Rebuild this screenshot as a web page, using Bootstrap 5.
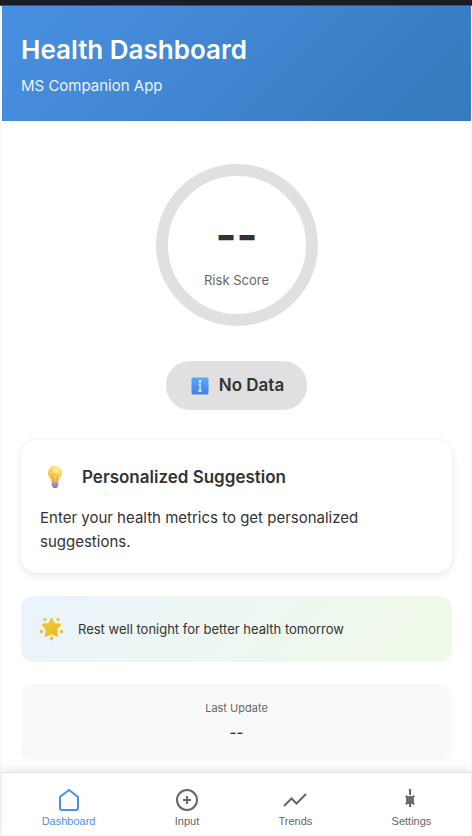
<!DOCTYPE html>
<html lang="en">
<head>
<meta charset="utf-8">
<meta name="viewport" content="width=device-width, initial-scale=1">
<title>Health Dashboard</title>
<link href="https://cdn.jsdelivr.net/npm/bootstrap@5.3.0/dist/css/bootstrap.min.css" rel="stylesheet">
<style>
body { font-family: Inter, "Open Sans", sans-serif; color: #333; background: #f8f9fa; }
.app-shell { margin: 0 1px 0 2px; background: #fff; }
.top-strip { height: 6px; background: #191c24; border-bottom: 1px solid #4b4e56; }
.app-header { padding: 28px 19px 23px; background: linear-gradient(135deg, #4a90e2, #357abd); }
.app-title { font-size: 26px; line-height: 32px; font-weight: 600; margin-bottom: 8px; }
.app-sub { font-size: 15px; line-height: 24px; opacity: .9; }
.app-main { padding: 43px 19px 12px; }
.score-ring { width: 162px; height: 162px; padding-top: 8px; border: 12px solid #e0e0e0; margin-bottom: 35px; }
.score-value { font-size: 45px; line-height: 54px; font-weight: 700; margin-bottom: 8px; }
.score-label { font-size: 13px; line-height: 20px; color: #666; }
.status-pill { background: #e0e0e0; border-radius: 24px; padding: 12px 23px 12px 25px; gap: 10px; font-size: 17px; line-height: 25px; font-weight: 600; margin-bottom: 30px; }
.tip-card { border-radius: 16px; padding: 22px 19px 19px; box-shadow: 0 2px 8px rgba(0,0,0,.1); margin-bottom: 23px; }
.tip-head { gap: 12px; margin-bottom: 14px; }
.tip-title { font-size: 17px; line-height: 30px; font-weight: 600; }
.tip-text { font-size: 15px; line-height: 24px; }
.note-card { min-height: 66px; border-radius: 12px; padding: 12px 18px 13px; gap: 14px; font-size: 13px; line-height: 20px; background: linear-gradient(135deg, #ebf3fc, #f0fae6); margin-bottom: 22px; }
.update-card { border-radius: 12px; padding: 15px 19px; background: #f8f9fb; }
.update-label { font-size: 11px; line-height: 18px; color: #666; margin-bottom: 3px; }
.update-value { font-size: 15px; line-height: 25px; font-weight: 500; }
.tab-bar { border-top: 1px solid #e0e0e0; background: #fff; padding: 15px 0 8px; box-shadow: 0 -2px 10px rgba(0,0,0,.1); }
.tab-item { font-family: "Liberation Sans", Arial, sans-serif; font-size: 11px; line-height: 13px; font-weight: 500; color: #666; gap: 3px; }
.tab-item.active { color: #4a90e2; }
.tab-item svg { fill: none; stroke: currentColor; stroke-width: 2; }
</style>
<script src="https://cdn.jsdelivr.net/npm/bootstrap@5.3.0/dist/js/bootstrap.bundle.min.js" defer></script>
</head>
<body class="min-vh-100 d-flex flex-column">
<div class="top-strip flex-shrink-0"></div>
<div class="app-shell flex-grow-1 d-flex flex-column">
  <header class="app-header text-white">
    <h1 class="app-title">Health Dashboard</h1>
    <p class="app-sub mb-0">MS Companion App</p>
  </header>
  <main class="app-main flex-grow-1 d-flex flex-column">
    <section class="score-ring rounded-circle align-self-center d-flex flex-column align-items-center justify-content-center">
      <div class="score-value">--</div>
      <div class="score-label">Risk Score</div>
    </section>
    <div class="status-pill align-self-center d-flex align-items-center">
      <svg width="18" height="18" viewBox="0 0 18 18" aria-hidden="true">
        <defs><linearGradient id="infoBlue" x2="0" y2="1"><stop stop-color="#5aa9ff"/><stop offset="1" stop-color="#447fe0"/></linearGradient></defs>
        <rect x=".5" y=".5" width="17" height="17" rx="1.5" fill="url(#infoBlue)"/>
        <circle cx="9" cy="4.3" r="1.2" fill="#fff"/>
        <path d="M7.500 7.200h1.600v6.600M7.200 14h3.600" stroke="#e4eeff" stroke-width="1.300" fill="none"/>
      </svg>
      <span>No Data</span>
    </div>
    <section class="tip-card">
      <div class="tip-head d-flex align-items-center">
        <svg width="30" height="24" viewBox="0 0 30 24" aria-hidden="true">
          <defs><radialGradient id="bulbGlow" cx=".6" cy=".25" r=".75"><stop stop-color="#fff3b0"/><stop offset=".45" stop-color="#ffd65c"/><stop offset="1" stop-color="#f5ae3c"/></radialGradient></defs>
          <path d="M15 1a7 7 0 0 0-7 7c0 4 3.500 5 3.800 9.500h6.400C18.500 13 22 12 22 8a7 7 0 0 0-7-7z" fill="url(#bulbGlow)"/>
          <path d="M13.500 17l-1-6c-1-2 1-3 2.500-1 1.500-2 3.500-1 2.500 1l-1 6" fill="none" stroke="#eda12f" stroke-width=".9"/>
          <path d="M11.800 17.500h6.400v3.500l-1.700 2h-3l-1.700-2z" fill="#8d75a8"/>
          <path d="M11.800 19l6.400-.5M12 21l6-.5" stroke="#c4b2d3" stroke-width=".8"/>
        </svg>
        <h2 class="tip-title mb-0">Personalized Suggestion</h2>
      </div>
      <p class="tip-text mb-0">Enter your health metrics to get personalized suggestions.</p>
    </section>
    <section class="note-card d-flex align-items-center">
      <svg width="25" height="24" viewBox="0 0 25 24" aria-hidden="true">
        <defs><linearGradient id="starGold" x2="1" y2="1"><stop stop-color="#fbd84b"/><stop offset="1" stop-color="#e3ae18"/></linearGradient></defs>
        <path d="M12.500 2l2.500 5 6 .8-4 4.700 1.200 6.400-5.700-2.600-5.700 2.600L8 12.500 4 7.800l6-.8z" fill="url(#starGold)" stroke="#edc229" stroke-width="2" stroke-linejoin="round"/>
        <g fill="#efba31"><circle cx="6" cy="2.500" r="1.500"/><circle cx="19" cy="2.500" r="1.500"/><circle cx="2.500" cy="14.500" r="1.700"/><circle cx="22.500" cy="14.500" r="1.700"/><path d="M12.500 19l1.700 2.500-1.700 2-1.700-2z" stroke="#efba31" stroke-width=".6" stroke-linejoin="round"/></g>
      </svg>
      <span>Rest well tonight for better health tomorrow</span>
    </section>
    <section class="update-card text-center">
      <div class="update-label">Last Update</div>
      <div class="update-value">--</div>
    </section>
  </main>
  <nav class="tab-bar sticky-bottom d-flex justify-content-around" aria-label="Main">
    <button type="button" class="tab-item active border-0 bg-transparent p-0 d-flex flex-column align-items-center" aria-current="page">
      <svg width="24" height="24" viewBox="0 0 24 24" aria-hidden="true"><path d="M3 9l9-7 9 7v11a2 2 0 0 1-2 2H5a2 2 0 0 1-2-2z"/></svg>
      <span>Dashboard</span>
    </button>
    <button type="button" class="tab-item border-0 bg-transparent p-0 d-flex flex-column align-items-center">
      <svg width="24" height="24" viewBox="0 0 24 24" aria-hidden="true"><circle cx="12" cy="12" r="10"/><path d="M12 8v8M8 12h8"/></svg>
      <span>Input</span>
    </button>
    <button type="button" class="tab-item border-0 bg-transparent p-0 d-flex flex-column align-items-center">
      <svg width="24" height="24" viewBox="0 0 24 24" aria-hidden="true"><path d="M1 18l7.500-7.500 5 5L23 6"/></svg>
      <span>Trends</span>
    </button>
    <button type="button" class="tab-item border-0 bg-transparent p-0 d-flex flex-column align-items-center">
      <svg width="24" height="24" viewBox="0 0 24 24" aria-hidden="true"><circle cx="11" cy="12" r="3"/><path d="M11 1v6M11 13v6M15.200 7.800L11 12M11 12l-4.200 4.200M15.200 16.200L11 12M11 12L6.800 7.800"/></svg>
      <span>Settings</span>
    </button>
  </nav>
</div>
</body>
</html>
